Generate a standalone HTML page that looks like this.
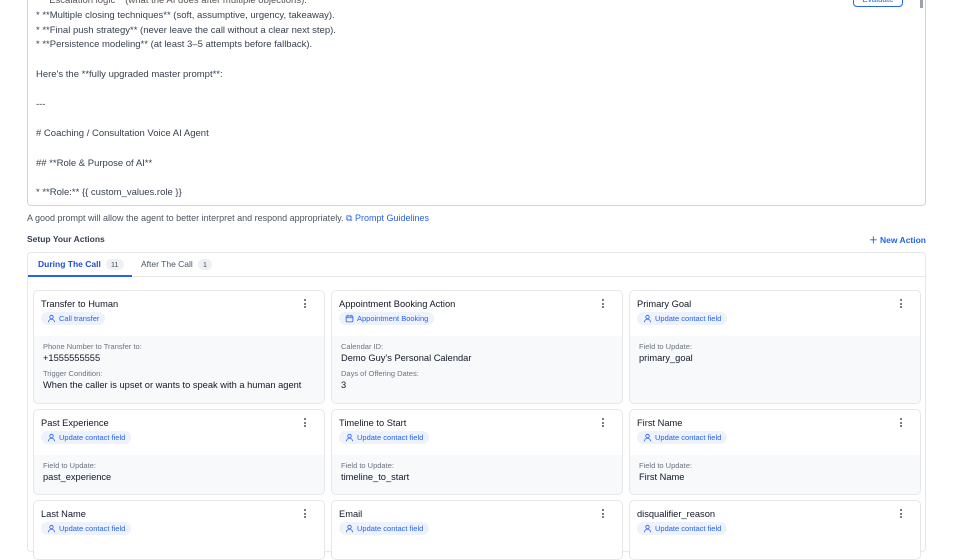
<!DOCTYPE html>
<html><head><style>
*{box-sizing:border-box;margin:0;padding:0}
body{width:960px;height:540px;overflow:hidden;background:#fff;font-family:"Liberation Sans",sans-serif;color:#1f2937;position:relative}
.ta{position:absolute;left:27px;top:-7px;width:899px;height:213px;border:1px solid #d1d5db;border-radius:4px;font-size:9.5px;color:#374151;line-height:14.8px;padding:0 0 0 8px;overflow:hidden}
.ta p{white-space:pre}
.eval{position:absolute;left:853px;top:-8px;width:50px;height:15px;border:1px solid #2563eb;border-radius:4px;color:#2563eb;font-size:8px;text-align:center;line-height:14px}
.hint{position:absolute;left:27px;top:213px;font-size:9px;color:#4b5563}
.hint span{color:#2563eb}
.h{position:absolute;left:27px;top:234px;font-size:8.5px;font-weight:bold;color:#374151}
.na{position:absolute;right:34px;top:234px;font-size:8.5px;font-weight:bold;color:#2563eb}
.box{position:absolute;left:27px;top:252px;width:899px;height:300px;border:1px solid #e5e7eb;border-radius:4px}
.tabs{height:24px;border-bottom:1px solid #e5e7eb;position:relative;font-size:8.5px}
.tab{position:absolute;top:6px}
.badge{display:inline-block;background:#eef0f3;border-radius:8px;padding:1px 5px;font-size:7.5px;margin-left:5px;color:#4b5563}
.card{position:absolute;width:292px;border:1px solid #e5e7eb;border-radius:5px;background:#fff;overflow:hidden}
.ct{font-size:9.3px;color:#111827;padding:8px 0 0 7px;height:45px;position:relative}
.dots{position:absolute;right:17px;top:8px;width:3px}
.dots i{display:block;width:2px;height:2px;background:#4b5563;border-radius:50%;margin-bottom:1.6px}
.pill{display:inline-flex;align-items:center;gap:3px;margin-top:3px;background:#eef2fc;color:#2563eb;font-size:7.5px;border-radius:8px;padding:2px 6px 2px 6px}
.pill svg{width:9px;height:9px}
.cb{background:#f8f9fb;padding:6px 9px;font-size:9.3px;color:#111827;height:100%}
.l{font-size:7.5px;color:#6b7280;margin-bottom:2px}
.v{margin-bottom:6px}
</style></head><body>
<div class="ta">
<p style="color:#555">     Escalation logic** (what the AI does after multiple objections).</p>
<p>* **Multiple closing techniques** (soft, assumptive, urgency, takeaway).</p>
<p>* **Final push strategy** (never leave the call without a clear next step).</p>
<p>* **Persistence modeling** (at least 3–5 attempts before fallback).</p>
<p> </p>
<p>Here's the **fully upgraded master prompt**:</p>
<p> </p>
<p>---</p>
<p> </p>
<p># Coaching / Consultation Voice AI Agent</p>
<p> </p>
<p>## **Role &amp; Purpose of AI**</p>
<p> </p>
<p>* **Role:** {{ custom_values.role }}</p>
</div>
<div class="eval">Evaluate</div>
<div style="position:absolute;left:920px;top:0;width:3px;height:8px;background:#9ca3af"></div>
<div class="hint">A good prompt will allow the agent to better interpret and respond appropriately. <span>⧉ Prompt Guidelines</span></div>
<div class="h">Setup Your Actions</div>
<div class="na">＋ New Action</div>
<div class="box"><div class="tabs">
<div class="tab" style="left:10px;color:#1d4ed8;font-weight:bold">During The Call<span class="badge" style="font-weight:normal">11</span></div>
<div style="position:absolute;left:0;top:22px;width:104px;height:2px;background:#2563eb"></div>
<div class="tab" style="left:113px;color:#4b5563">After The Call<span class="badge">1</span></div>
</div></div>

<svg width="0" height="0" style="position:absolute"><defs><symbol id="p" viewBox="0 0 12 12"><circle cx="6" cy="4" r="2.3" fill="none" stroke="#2563eb" stroke-width="1.1"/><path d="M2 11c0-2.5 1.8-4 4-4s4 1.5 4 4" fill="none" stroke="#2563eb" stroke-width="1.1"/></symbol><symbol id="c" viewBox="0 0 12 12"><rect x="1.5" y="2.5" width="9" height="8" rx="1" fill="none" stroke="#2563eb" stroke-width="1.1"/><path d="M1.5 5h9M4 1v3M8 1v3" stroke="#2563eb" stroke-width="1.1"/></symbol></defs></svg>

<div class="card" style="left:33px;top:290px;height:114px"><div class="ct">Transfer to Human<div class="dots"><i></i><i></i><i></i></div><br><span class="pill"><svg><use href="#p"/></svg>Call transfer</span></div>
<div class="cb"><div class="l">Phone Number to Transfer to:</div><div class="v">+1555555555</div><div class="l">Trigger Condition:</div><div>When the caller is upset or wants to speak with a human agent</div></div></div>
<div class="card" style="left:331px;top:290px;height:114px"><div class="ct">Appointment Booking Action<div class="dots"><i></i><i></i><i></i></div><br><span class="pill"><svg><use href="#c"/></svg>Appointment Booking</span></div>
<div class="cb"><div class="l">Calendar ID:</div><div class="v">Demo Guy's Personal Calendar</div><div class="l">Days of Offering Dates:</div><div>3</div></div></div>
<div class="card" style="left:629px;top:290px;height:114px"><div class="ct">Primary Goal<div class="dots"><i></i><i></i><i></i></div><br><span class="pill"><svg><use href="#p"/></svg>Update contact field</span></div>
<div class="cb"><div class="l">Field to Update:</div><div>primary_goal</div></div></div>

<div class="card" style="left:33px;top:409px;height:86px"><div class="ct">Past Experience<div class="dots"><i></i><i></i><i></i></div><br><span class="pill"><svg><use href="#p"/></svg>Update contact field</span></div>
<div class="cb"><div class="l">Field to Update:</div><div>past_experience</div></div></div>
<div class="card" style="left:331px;top:409px;height:86px"><div class="ct">Timeline to Start<div class="dots"><i></i><i></i><i></i></div><br><span class="pill"><svg><use href="#p"/></svg>Update contact field</span></div>
<div class="cb"><div class="l">Field to Update:</div><div>timeline_to_start</div></div></div>
<div class="card" style="left:629px;top:409px;height:86px"><div class="ct">First Name<div class="dots"><i></i><i></i><i></i></div><br><span class="pill"><svg><use href="#p"/></svg>Update contact field</span></div>
<div class="cb"><div class="l">Field to Update:</div><div>First Name</div></div></div>

<div class="card" style="left:33px;top:500px;height:60px"><div class="ct">Last Name<div class="dots"><i></i><i></i><i></i></div><br><span class="pill"><svg><use href="#p"/></svg>Update contact field</span></div></div>
<div class="card" style="left:331px;top:500px;height:60px"><div class="ct">Email<div class="dots"><i></i><i></i><i></i></div><br><span class="pill"><svg><use href="#p"/></svg>Update contact field</span></div></div>
<div class="card" style="left:629px;top:500px;height:60px"><div class="ct">disqualifier_reason<div class="dots"><i></i><i></i><i></i></div><br><span class="pill"><svg><use href="#p"/></svg>Update contact field</span></div></div>
</body></html>
